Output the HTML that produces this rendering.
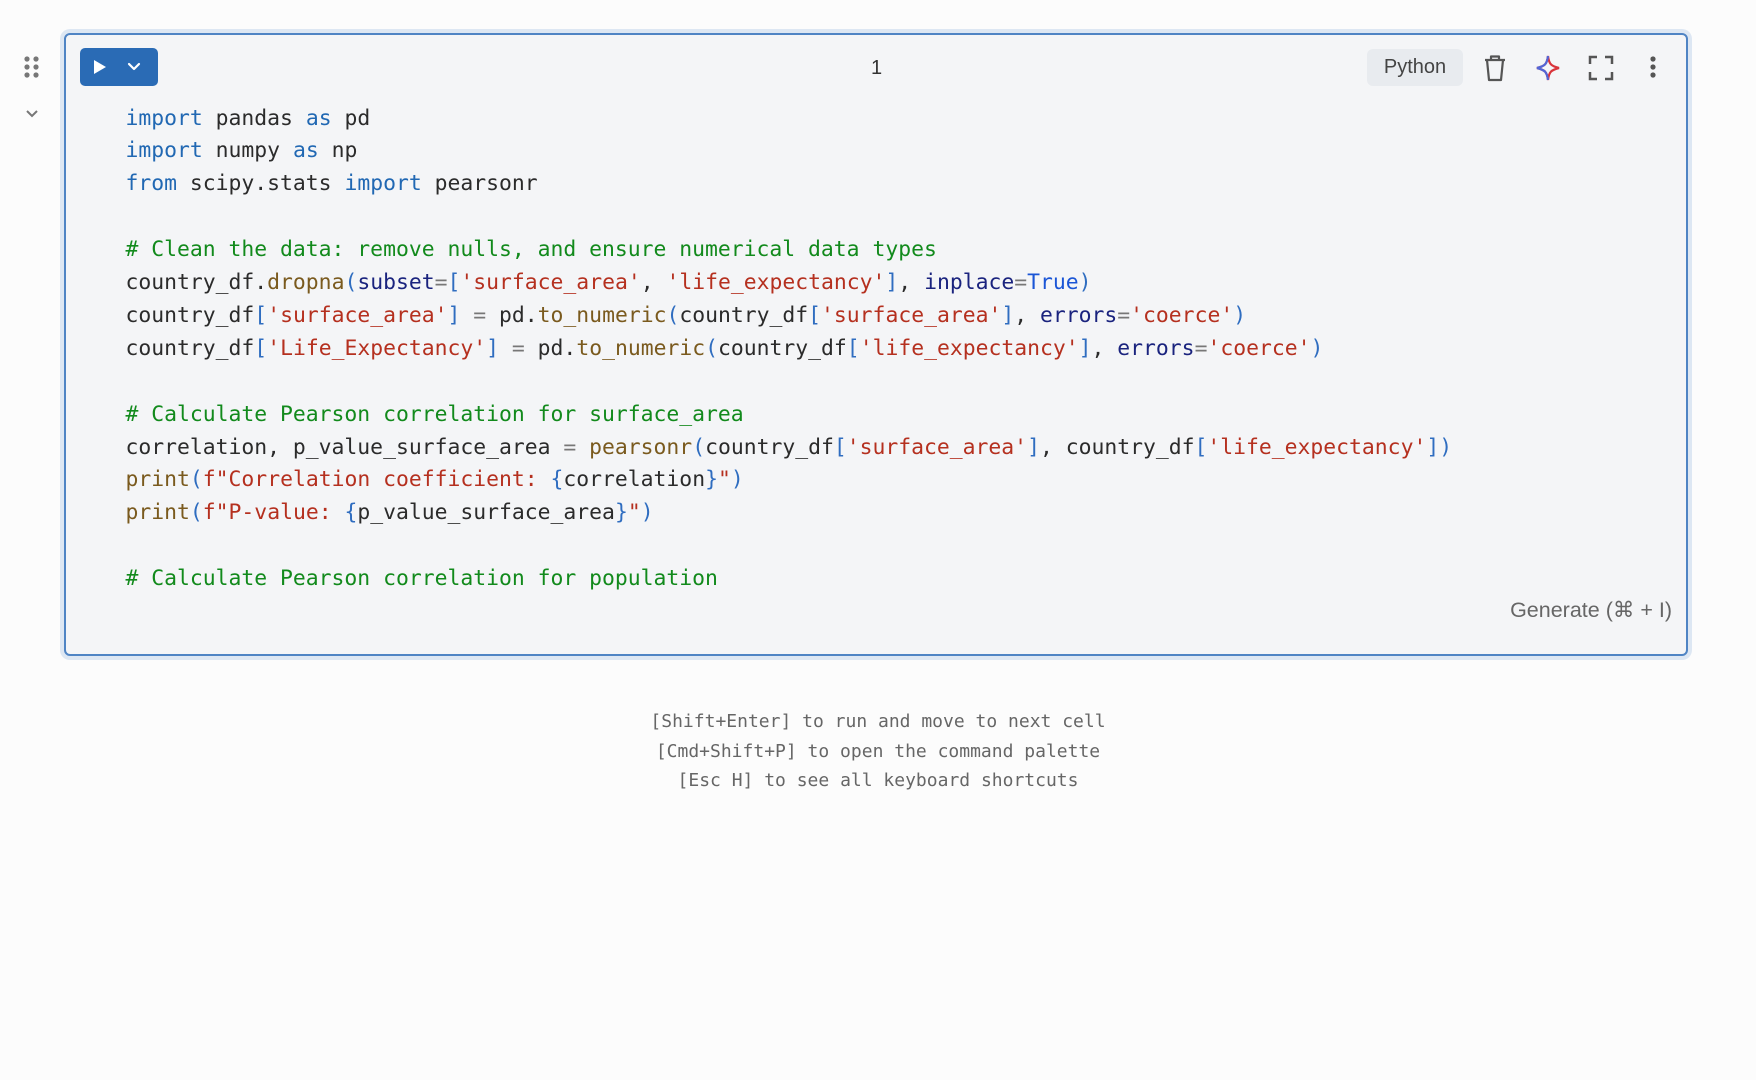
<!DOCTYPE html>
<html><head><meta charset="utf-8"><style>
html,body{margin:0;padding:0;background:#fcfcfc;width:1756px;height:1080px;overflow:hidden;font-family:"Liberation Sans",sans-serif}
.cell{position:absolute;left:64px;top:33px;width:1620px;height:619px;background:#f4f5f7;border:2px solid #4f84c4;border-radius:6px;box-shadow:0 0 0 4px #dde7f3}
.run{position:absolute;left:80px;top:48px;width:78px;height:38px;background:#2a6bb5;border-radius:5px}
pre{position:absolute;left:125.5px;top:102.5px;margin:0;font-family:"DejaVu Sans Mono",monospace;font-size:21.4px;line-height:32.9px;color:#2b2b2b}
.k{color:#2168b3}.c{color:#128a1c}.s{color:#b5301f}.f{color:#7a5a1e}.p{color:#1a237e}.b{color:#2f6dc0}.o{color:#777}.t{color:#1a55d6}
.foot{position:absolute;left:0;width:1756px;top:707px;text-align:center;font-family:"DejaVu Sans Mono",monospace;font-size:18px;line-height:29.5px;color:#666}
.ic{position:absolute}
</style></head><body>
<svg class="ic" style="left:22px;top:55px" width="20" height="26"><g fill="#777"><circle cx="5" cy="4" r="2.6"/><circle cx="14" cy="4" r="2.6"/><circle cx="5" cy="12" r="2.6"/><circle cx="14" cy="12" r="2.6"/><circle cx="5" cy="20" r="2.6"/><circle cx="14" cy="20" r="2.6"/></g></svg>
<svg class="ic" style="left:24px;top:108px" width="16" height="12"><path d="M3 3l5 5 5-5" stroke="#777" stroke-width="2" fill="none"/></svg>
<div class="cell"></div>
<div class="run"><svg width="78" height="38"><path d="M14 12v14l12-7z" fill="#fff"/><path d="M49 16l5 5 5-5" stroke="#fff" stroke-width="2.2" fill="none" stroke-linecap="round" stroke-linejoin="round"/></svg></div>
<div style="position:absolute;left:871px;top:57px;font-size:20px;color:#333">1</div>
<div style="position:absolute;left:1367px;top:49px;width:96px;height:37px;background:#e8ebef;border-radius:6px;font-size:20px;color:#444;text-align:center;line-height:37px">Python</div>
<svg class="ic" style="left:1482px;top:53px" width="26" height="30"><path d="M3 7h20M9 7V3.5h8V7M5 7l2 20h12l2-20" stroke="#555" stroke-width="2.2" fill="none" stroke-linejoin="round"/></svg>
<svg class="ic" style="left:1535px;top:54px" width="26" height="28"><path d="M13 2C14 10 16 12 24 14C16 16 14 18 13 26C12 18 10 16 2 14C10 12 12 10 13 2Z" stroke="#d9343b" stroke-width="2.2" fill="none"/><path d="M13 2C12 10 10 12 2 14C10 16 12 18 13 26" stroke="#5266d6" stroke-width="2.2" fill="none"/></svg>
<svg class="ic" style="left:1588px;top:55px" width="26" height="26"><path d="M2 9V2h7M17 2h7v7M24 17v7h-7M9 24H2v-7" stroke="#555" stroke-width="2.5" fill="none"/></svg>
<svg class="ic" style="left:1647px;top:55px" width="12" height="26"><g fill="#555"><circle cx="6" cy="4" r="2.6"/><circle cx="6" cy="12" r="2.6"/><circle cx="6" cy="20" r="2.6"/></g></svg>
<pre><span class="k">import</span> pandas <span class="k">as</span> pd
<span class="k">import</span> numpy <span class="k">as</span> np
<span class="k">from</span> scipy.stats <span class="k">import</span> pearsonr

<span class="c"># Clean the data: remove nulls, and ensure numerical data types</span>
country_df.<span class="f">dropna</span><span class="b">(</span><span class="p">subset</span><span class="o">=</span><span class="b">[</span><span class="s">'surface_area'</span>, <span class="s">'life_expectancy'</span><span class="b">]</span>, <span class="p">inplace</span><span class="o">=</span><span class="t">True</span><span class="b">)</span>
country_df<span class="b">[</span><span class="s">'surface_area'</span><span class="b">]</span> <span class="o">=</span> pd.<span class="f">to_numeric</span><span class="b">(</span>country_df<span class="b">[</span><span class="s">'surface_area'</span><span class="b">]</span>, <span class="p">errors</span><span class="o">=</span><span class="s">'coerce'</span><span class="b">)</span>
country_df<span class="b">[</span><span class="s">'Life_Expectancy'</span><span class="b">]</span> <span class="o">=</span> pd.<span class="f">to_numeric</span><span class="b">(</span>country_df<span class="b">[</span><span class="s">'life_expectancy'</span><span class="b">]</span>, <span class="p">errors</span><span class="o">=</span><span class="s">'coerce'</span><span class="b">)</span>

<span class="c"># Calculate Pearson correlation for surface_area</span>
correlation, p_value_surface_area <span class="o">=</span> <span class="f">pearsonr</span><span class="b">(</span>country_df<span class="b">[</span><span class="s">'surface_area'</span><span class="b">]</span>, country_df<span class="b">[</span><span class="s">'life_expectancy'</span><span class="b">])</span>
<span class="f">print</span><span class="b">(</span><span class="s">f"Correlation coefficient: </span><span class="b">{</span>correlation<span class="b">}</span><span class="s">"</span><span class="b">)</span>
<span class="f">print</span><span class="b">(</span><span class="s">f"P-value: </span><span class="b">{</span>p_value_surface_area<span class="b">}</span><span class="s">"</span><span class="b">)</span>

<span class="c"># Calculate Pearson correlation for population</span></pre>
<div style="position:absolute;right:84px;top:598px;font-size:21.5px;color:#666">Generate (⌘ + I)</div>
<div class="foot">[Shift+Enter] to run and move to next cell<br>[Cmd+Shift+P] to open the command palette<br>[Esc H] to see all keyboard shortcuts</div>
</body></html>
